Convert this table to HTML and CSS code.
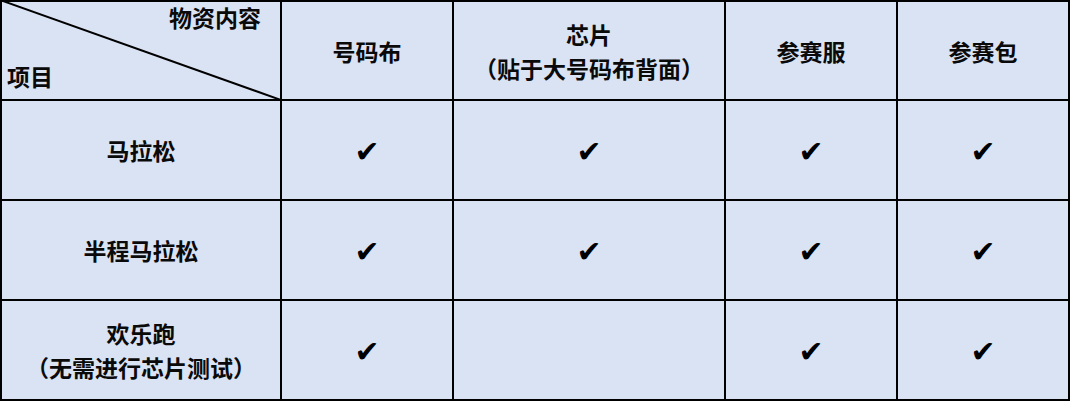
FILE: index.html
```html
<!DOCTYPE html>
<html lang="zh">
<head>
<meta charset="utf-8">
<link rel="stylesheet" href="styles.css">
</head>
<body>
<div class="grid">
  <div class="cell corner">
    <svg class="diag" viewBox="0 0 100 100" preserveAspectRatio="none"><line x1="0" y1="0" x2="100" y2="100" stroke="#000" stroke-width="2" vector-effect="non-scaling-stroke"/></svg>
    <span class="corner-top">物资内容</span>
    <span class="corner-bottom">项目</span>
  </div>
  <div class="cell">号码布</div>
  <div class="cell">芯片<br>（贴于大号码布背面）</div>
  <div class="cell">参赛服</div>
  <div class="cell">参赛包</div>

  <div class="cell">马拉松</div>
  <div class="cell check">✔</div>
  <div class="cell check">✔</div>
  <div class="cell check">✔</div>
  <div class="cell check">✔</div>

  <div class="cell">半程马拉松</div>
  <div class="cell check">✔</div>
  <div class="cell check">✔</div>
  <div class="cell check">✔</div>
  <div class="cell check">✔</div>

  <div class="cell">欢乐跑<br>（无需进行芯片测试）</div>
  <div class="cell check">✔</div>
  <div class="cell check"></div>
  <div class="cell check">✔</div>
  <div class="cell check">✔</div>
</div>
</body>
</html>
```
FILE: styles.css
```css
html, body {
  margin: 0;
  padding: 0;
  background: #fff;
}
.grid {
  display: grid;
  grid-template-columns: 278px 170px 270px 170px 170px;
  grid-template-rows: 97px 98px 98px 98px;
  gap: 2px;
  padding: 2px;
  width: max-content;
  background: #000;
  font-family: "Noto Sans CJK SC", sans-serif;
  font-weight: bold;
  font-size: 23px;
  color: #0a0a0a;
}
.cell {
  background: #dae3f3;
  display: flex;
  align-items: center;
  justify-content: center;
  text-align: center;
  line-height: 34px;
}
.corner {
  position: relative;
  display: block;
}
.diag {
  position: absolute;
  left: -2px;
  top: -2px;
  width: calc(100% + 3px);
  height: calc(100% + 3px);
}
.corner-top {
  position: absolute;
  right: 19px;
  top: -2px;
}
.corner-bottom {
  position: absolute;
  left: 5px;
  top: 57px;
}
.check {
  font-family: "DejaVu Sans", sans-serif;
  font-size: 30px;
  color: #000;
  padding-top: 4px;
}
```
